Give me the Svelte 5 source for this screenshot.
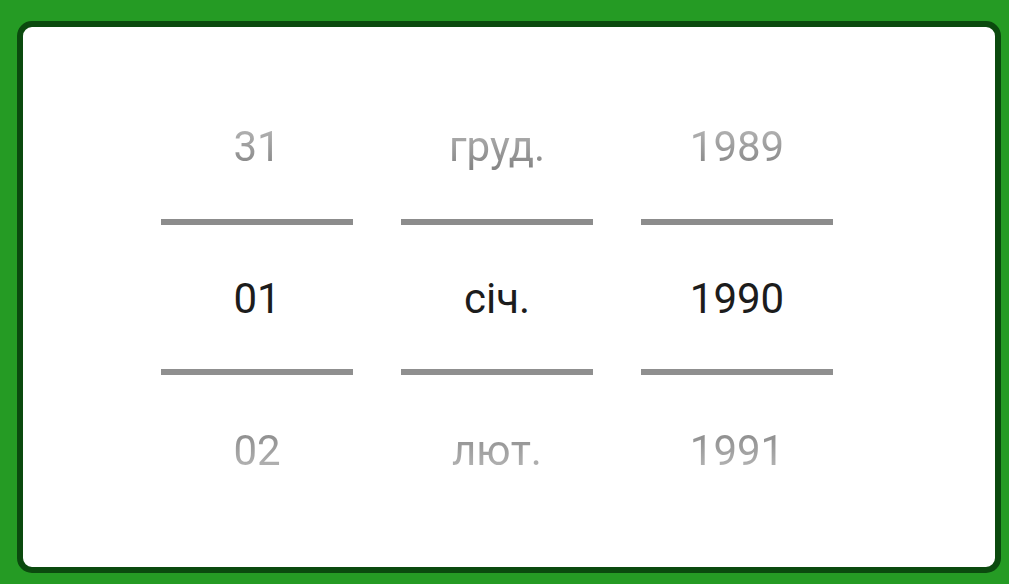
<script>
  let columns = $state([
    { label: 'День', prev: '31', value: '01', next: '02' },
    { label: 'Місяць', prev: 'груд.', value: 'січ.', next: 'лют.' },
    { label: 'Рік', prev: '1989', value: '1990', next: '1991' }
  ]);
</script>

<main class="page">
  <section class="dialog">
    <div class="picker">
      {#each columns as column}
        <div class="column">
          <button class="step prev" type="button">{column.prev}</button>
          <input class="value" type="text" aria-label={column.label} bind:value={column.value} />
          <button class="step next" type="button">{column.next}</button>
        </div>
      {/each}
    </div>
  </section>
</main>

<style>
  :global(body) {
    background: #259b24;
  }

  .page {
    box-sizing: border-box;
    min-height: 100vh;
    padding: 21px 8px 11px 17px;
    display: flex;
    font-family: Roboto, "Noto Sans", sans-serif;
  }

  .dialog {
    flex: 1;
    box-sizing: border-box;
    border: 6px solid #0b4a0e;
    border-radius: 15px;
    background: #fff;
    padding: 48px 24px 0 0;
  }

  .picker {
    display: flex;
    justify-content: center;
    gap: 48px;
  }

  .column {
    width: 192px;
    display: flex;
    flex-direction: column;
  }

  .step,
  .value {
    box-sizing: border-box;
    width: 100%;
    margin: 0;
    padding: 0;
    border: 0;
    border-radius: 0;
    background: transparent;
    font: 400 42px/50px Roboto, "Noto Sans", sans-serif;
    text-align: center;
  }

  .step {
    color: transparent;
    background-clip: text;
  }

  .prev {
    height: 144px;
    background-image: linear-gradient(#b4b4b4 52px, #868686 92px);
  }

  .next {
    height: 152px;
    background-image: linear-gradient(#8c8c8c 56px, #b6b6b6 96px);
  }

  .value {
    height: 156px;
    padding-top: 2px;
    border-top: 6px solid #8c8c8c;
    border-bottom: 6px solid #8f8f8f;
    color: #1c1c1c;
    outline: none;
  }
</style>
